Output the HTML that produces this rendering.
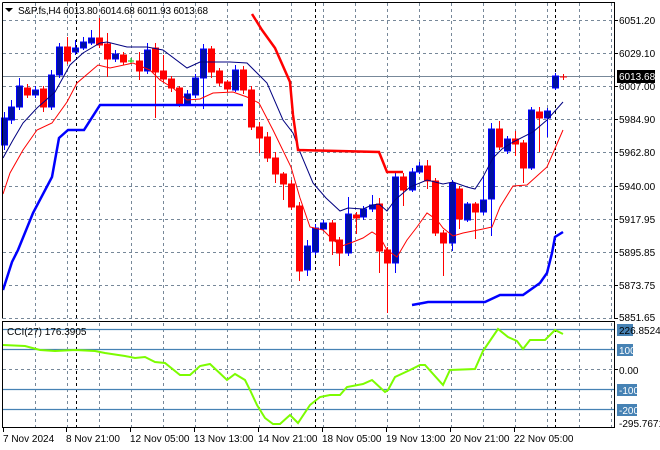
<!DOCTYPE html>
<html><head><meta charset="utf-8"><style>
html,body{margin:0;padding:0;background:#fff;width:660px;height:450px;overflow:hidden}
svg{display:block;font-family:"Liberation Sans",sans-serif}
</style></head><body>
<svg width="660" height="450" xmlns="http://www.w3.org/2000/svg">
<rect width="660" height="450" fill="#fff"/>
<g stroke="#778899" stroke-width="1" stroke-dasharray="3,3" fill="none">
<path d="M3 20.5H614M3 53.5H614M3 86.5H614M3 119.5H614M3 152.5H614M3 186.5H614M3 219.5H614M3 252.5H614M3 285.5H614M3 318.5H614M3 369.5H614"/>
<path d="M35.5 3V318M67.5 3V318M99.5 3V318M131.5 3V318M163.5 3V318M195.5 3V318M227.5 3V318M259.5 3V318M291.5 3V318M323.5 3V318M355.5 3V318M387.5 3V318M419.5 3V318M451.5 3V318M483.5 3V318M515.5 3V318M547.5 3V318M579.5 3V318M611.5 3V318"/>
<path d="M35.5 323V427M67.5 323V427M99.5 323V427M131.5 323V427M163.5 323V427M195.5 323V427M227.5 323V427M259.5 323V427M291.5 323V427M323.5 323V427M355.5 323V427M387.5 323V427M419.5 323V427M451.5 323V427M483.5 323V427M515.5 323V427M547.5 323V427M579.5 323V427M611.5 323V427"/>
</g>
<g stroke="#000" stroke-width="1" stroke-dasharray="3,3">
<path d="M76.5 3V318M315.5 3V318M555.5 3V318M76.5 323V427M315.5 323V427M555.5 323V427"/>
</g>
<line x1="3" y1="76.5" x2="614" y2="76.5" stroke="#778899"/>
<g stroke-width="1">
<g stroke="#0000ff" fill="#0010a0">
<path d="M4.5 112V150M11.5 100V124M19.5 78V110M35.5 86V98M51.5 70V110M59.5 43V78M75.5 40V55M83.5 37V50M91.5 30V45M115.5 50V62M147.5 43V74M187.5 90V106M195.5 74V98M203.5 44V109M235.5 65V92M307.5 240V276M315.5 224V255M323.5 220V231M348.5 197V256M363.5 206V220M372.5 195V212M395.5 172V273M412.5 168V192M419.5 162V174M452.5 180V251M467.5 202V222M483.5 176V215M491.5 123V236M507.5 136V154M531.5 107V170M547.5 108V137M555.5 73V90"/>
<rect x="1.5" y="118" width="6" height="27"/><rect x="8.5" y="107" width="6" height="13"/><rect x="16.5" y="86" width="6" height="21"/><rect x="32.5" y="90" width="6" height="5"/><rect x="48.5" y="75" width="6" height="32"/><rect x="56.5" y="47" width="6" height="28"/><rect x="72.5" y="48" width="6" height="4"/><rect x="80.5" y="42" width="6" height="6"/><rect x="88.5" y="38" width="6" height="5"/><rect x="112.5" y="54" width="6" height="5"/><rect x="144.5" y="50" width="6" height="21"/><rect x="184.5" y="94" width="6" height="10"/><rect x="192.5" y="78" width="6" height="17"/><rect x="200.5" y="49" width="6" height="29"/><rect x="232.5" y="70" width="6" height="20"/><rect x="304.5" y="246" width="6" height="24"/><rect x="312.5" y="228" width="6" height="24"/><rect x="320.5" y="223" width="6" height="6"/><rect x="345.5" y="214" width="6" height="39"/><rect x="360.5" y="209" width="6" height="8"/><rect x="369.5" y="205" width="6" height="4"/><rect x="392.5" y="177" width="6" height="86"/><rect x="409.5" y="172" width="6" height="18"/><rect x="416.5" y="166" width="6" height="6"/><rect x="449.5" y="183" width="6" height="60"/><rect x="464.5" y="204" width="6" height="16"/><rect x="480.5" y="200" width="6" height="12"/><rect x="488.5" y="129" width="6" height="70"/><rect x="504.5" y="139" width="6" height="12"/><rect x="528.5" y="110" width="6" height="58"/><rect x="544.5" y="111" width="6" height="7"/><rect x="552.5" y="76" width="6" height="12"/>
</g>
<g stroke="#ff0000" fill="#ff0000">
<path d="M27.5 84V98M43.5 86V112M67.5 37V64M99.5 18V48M107.5 33V77M123.5 52V65M139.5 52V80M155.5 43V118M163.5 55V82M171.5 76V92M179.5 86V107M211.5 46V78M219.5 68V86M227.5 80V92M243.5 66V94M251.5 86V130M259.5 122V153M267.5 132V162M275.5 152V183M283.5 172V200M291.5 180V210M299.5 202V281M332.5 220V255M339.5 237V266M356.5 212V234M379.5 198V273M387.5 247V313M403.5 173V206M427.5 160V189M435.5 178V236M443.5 230V276M459.5 186V229M475.5 202V239M499.5 121V150M515.5 131V156M523.5 140V183M539.5 107V152M563.5 74V80M560 77H567"/>
<rect x="24.5" y="88" width="6" height="7"/><rect x="40.5" y="89" width="6" height="18"/><rect x="64.5" y="47" width="6" height="14"/><rect x="96.5" y="38" width="6" height="7"/><rect x="104.5" y="44" width="6" height="15"/><rect x="120.5" y="55" width="6" height="7"/><rect x="136.5" y="61" width="6" height="10"/><rect x="152.5" y="48" width="6" height="24"/><rect x="160.5" y="71" width="6" height="8"/><rect x="168.5" y="79" width="6" height="9"/><rect x="176.5" y="88" width="6" height="16"/><rect x="208.5" y="49" width="6" height="23"/><rect x="216.5" y="71" width="6" height="12"/><rect x="224.5" y="82" width="6" height="7"/><rect x="240.5" y="70" width="6" height="20"/><rect x="248.5" y="90" width="6" height="37"/><rect x="256.5" y="127" width="6" height="11"/><rect x="264.5" y="137" width="6" height="21"/><rect x="272.5" y="158" width="6" height="16"/><rect x="280.5" y="174" width="6" height="10"/><rect x="288.5" y="184" width="6" height="23"/><rect x="296.5" y="206" width="6" height="65"/><rect x="329.5" y="223" width="6" height="18"/><rect x="336.5" y="240" width="6" height="13"/><rect x="353.5" y="215" width="6" height="3"/><rect x="376.5" y="204" width="6" height="47"/><rect x="384.5" y="250" width="6" height="13"/><rect x="400.5" y="177" width="6" height="13"/><rect x="424.5" y="166" width="6" height="15"/><rect x="432.5" y="181" width="6" height="52"/><rect x="440.5" y="233" width="6" height="10"/><rect x="456.5" y="189" width="6" height="30"/><rect x="472.5" y="204" width="6" height="8"/><rect x="496.5" y="129" width="6" height="18"/><rect x="512.5" y="139" width="6" height="5"/><rect x="520.5" y="143" width="6" height="25"/><rect x="536.5" y="112" width="6" height="6"/>
</g>
<path d="M128 61H134M131 58V64" stroke="#00cc00"/>
</g>
<polyline fill="none" stroke="#000080" stroke-width="1" points="3,158 13,140 23,123 37,108 55,92 70,65 83,53 100,43 107,42 127,47 147,47 163,50 187,68 200,62 230,62 247,63 267,83 283,120 293,133 300,152 313,183 326,198 340,211 348,208 363,209 372,205 379,204 387,211 395,200 410,187 427,180 443,184 453,182 467,187 475,189 483,177 493,158 502,149 513,142 533,132 547,120 563,102"/>
<polyline fill="none" stroke="#ff0000" stroke-width="1" points="3,194 10,173 23,150 37,130 52,123 67,102 77,83 98,65 110,68 133,63 150,70 160,80 173,88 187,100 200,99 213,93 233,92 247,97 259,103 273,130 291,167 300,198 310,227 323,230 333,240 342,246 353,242 363,238 372,232 380,237 387,250 397,257 407,240 417,227 427,213 437,220 443,228 453,236 463,233 473,231 483,229 492,227 500,207 513,186 527,185 547,167 563,130"/>
<polyline fill="none" stroke="#0000ff" stroke-width="2.5" points="3,290 12,262 18,250 33,213 52,177 59,138 68,130 84,130 100,105 243,105"/>
<polyline fill="none" stroke="#0000ff" stroke-width="2.5" points="412,305 423,303 428,302 485,302 500,295 523,295 540,283 547,273 552,253 555,237 563,232"/>
<polyline fill="none" stroke="#ff0000" stroke-width="2.5" points="252,14 262,30 275,48 290,82 293,115 298,150 379,152 387,172 403,172"/>
<g stroke="#4682b4" stroke-width="1.3">
<path d="M3 329.5H614M3 349.5H614M3 389.5H614M3 409.5H614"/>
</g>
<polyline fill="none" stroke="#7cfc00" stroke-width="2" points="3,345 25,346 40,350 55,351 75,350 95,351 105,353 125,356 135,358 145,357 155,362 165,363 180,375 190,375 200,366 210,364 227,380 235,374 245,380 250,390 257,405 265,418 273,424 280,424 290,415 298,423 310,405 320,397 330,395 340,395 347,387 363,384 372,380 385,392 388,390 395,377 410,370 420,365 425,365 443,385 450,370 475,369 483,351 498,329 508,337 517,341 523,349 530,340 545,340 555,330 563,334"/>
<g stroke="#000" stroke-width="1" fill="none">
<path d="M2.5 2.5H614.5V318.5M2.5 2.5V318.5"/>
<path d="M2.5 321.5H614.5V427.5H2.5Z"/>
</g>
<g stroke="#000"><path d="M614 20.5h4M614 53.5h4M614 86.5h4M614 119.5h4M614 152.5h4M614 186.5h4M614 219.5h4M614 252.5h4M614 285.5h4M614 318.5h4M614 369.5h4M3.5 428v4M66.5 428v4M130.5 428v4M194.5 428v4M258.5 428v4M322.5 428v4M386.5 428v4M450.5 428v4M514.5 428v4"/></g>
<path d="M5 8H13L9 12Z" fill="#000"/>
<text x="18" y="14" font-size="10" fill="#000" textLength="190">S&amp;P.fs,H4  6013.80 6014.68 6011.93 6013.68</text>
<text x="7" y="335" font-size="10" fill="#000">CCI(27) 176.3905</text>
<g font-size="10" fill="#000">
<text x="619" y="24">6051.20</text>
<text x="619" y="57">6029.10</text>
<text x="619" y="90">6007.00</text>
<text x="619" y="123">5984.90</text>
<text x="619" y="156">5962.80</text>
<text x="619" y="190">5940.00</text>
<text x="619" y="223">5917.95</text>
<text x="619" y="256">5895.85</text>
<text x="619" y="289">5873.75</text>
<text x="619" y="321">5851.65</text>
<text x="619" y="374">0.00</text>
<text x="619" y="427">-295.7671</text>
</g>
<rect x="617" y="70" width="38" height="13" fill="#000"/>
<text x="619" y="80" font-size="10" fill="#fff">6013.68</text>
<g fill="#4682b4"><rect x="617" y="324" width="16" height="12"/><rect x="617" y="344" width="16" height="12"/><rect x="617" y="384" width="20" height="12"/><rect x="617" y="404" width="20" height="12"/></g>
<g font-size="10" fill="#fff"><text x="619" y="354">100</text><text x="619" y="394">-100</text><text x="619" y="414">-200</text></g>
<text x="619" y="334" font-size="10" fill="#000">226.8524</text>
<g font-size="10" fill="#000">
<text x="3" y="442">7 Nov 2024</text>
<text x="66" y="442">8 Nov 21:00</text>
<text x="130" y="442">12 Nov 05:00</text>
<text x="194" y="442">13 Nov 13:00</text>
<text x="258" y="442">14 Nov 21:00</text>
<text x="322" y="442">18 Nov 05:00</text>
<text x="386" y="442">19 Nov 13:00</text>
<text x="450" y="442">20 Nov 21:00</text>
<text x="514" y="442">22 Nov 05:00</text>
</g>
</svg>
</body></html>
